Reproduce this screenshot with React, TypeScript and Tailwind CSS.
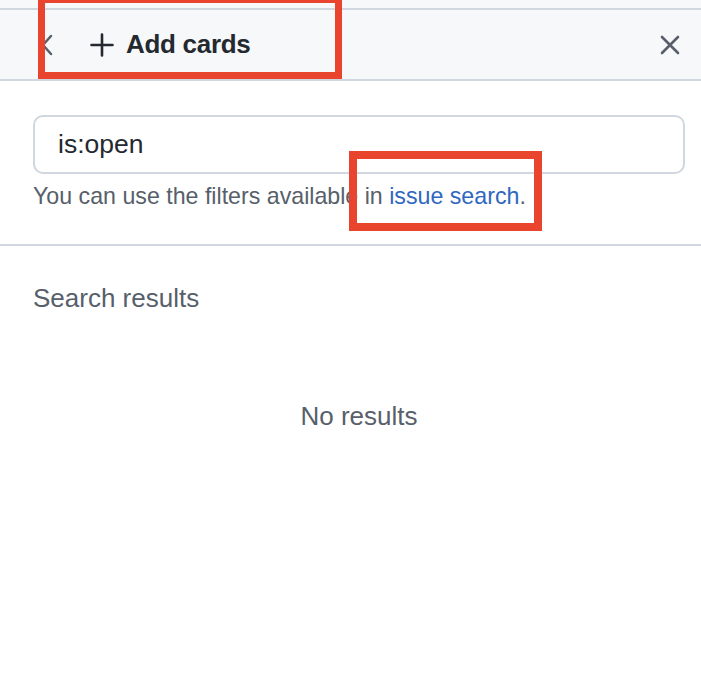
import React from 'react';

const App: React.FC = () => {
  return (
    <div className="relative w-[701px] h-[676px] bg-white overflow-hidden text-[#24292f] font-['Liberation_Sans',Arial,sans-serif]">
      {/* Top strip */}
      <div className="h-[10px] bg-[#f6f8fa] border-b-2 border-[#d0d7de]" />

      {/* Header */}
      <div className="h-[71px] bg-[#f6f8fa] border-b-2 border-[#d0d7de] flex items-center pl-[41px] pr-[21px]">
        <svg width="12" height="22" viewBox="0 0 12 22" fill="none" className="shrink-0">
          <path d="M10 2 L2 11 L10 20" stroke="#57606a" strokeWidth="2.5" strokeLinecap="round" strokeLinejoin="round" />
        </svg>
        <svg width="24" height="24" viewBox="0 0 24 24" fill="none" className="ml-[37px] shrink-0">
          <path d="M12 1.5 V22.5 M1.5 12 H22.5" stroke="#24292f" strokeWidth="2.6" strokeLinecap="round" />
        </svg>
        <span className="ml-[12px] text-[26px] font-bold tracking-[-0.3px]">Add cards</span>
        <svg width="20" height="20" viewBox="0 0 20 20" fill="none" className="ml-auto shrink-0">
          <path d="M2 2 L18 18 M18 2 L2 18" stroke="#57606a" strokeWidth="2.6" strokeLinecap="round" />
        </svg>
      </div>

      {/* Search form */}
      <div className="pl-[33px] pr-[16px] pt-[34px] pb-[34px] border-b-2 border-[#d0d7de]">
        <div className="h-[59px] rounded-[10px] border-2 border-[#d0d7de] flex items-center px-[23px]">
          <span className="text-[26.5px] text-[#24292f]">is:open</span>
        </div>
        <p className="mt-[8px] text-[23.2px] leading-[28px] text-[#57606a]">
          You can use the filters available in <span className="text-[#2f67bf]">issue search</span>.
        </p>
      </div>

      {/* Results */}
      <div className="px-[33px] pt-[38px]">
        <div className="text-[26px] leading-[28px] text-[#57606a]">Search results</div>
        <div className="mt-[90px] text-center pl-[17px] text-[26px] leading-[28px] text-[#57606a]">No results</div>
      </div>

      {/* Annotation boxes */}
      <div className="absolute left-[38px] top-[-4px] w-[304px] h-[83px] border-[7px] border-[#e8442e]" />
      <div className="absolute left-[349px] top-[151px] w-[193px] h-[80px] border-[8px] border-[#e8442e]" />
    </div>
  );
};

export default App;
